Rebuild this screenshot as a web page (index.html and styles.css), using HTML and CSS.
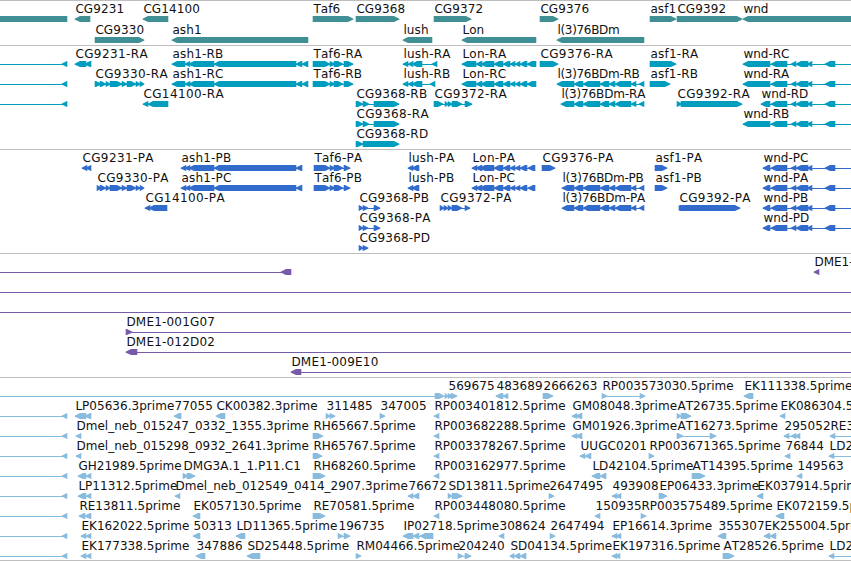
FILE: index.html
```html
<!DOCTYPE html>
<html lang="en">
<head>
    <meta charset="UTF-8">
    <meta name="viewport" content="width=device-width, initial-scale=1.0">
    <title>Genome Browser</title>
    <link rel="stylesheet" href="styles.css">
</head>
<body>
    <main class="browser">
        <section class="track genes"><svg id="genes" width="851" height="44"></svg></section>
        <section class="track transcripts"><svg id="transcripts" width="851" height="103"></svg></section>
        <section class="track proteins"><svg id="proteins" width="851" height="103"></svg></section>
        <section class="track clones"><svg id="clones" width="851" height="123"></svg></section>
        <section class="track ests"><svg id="ests" width="851" height="182"></svg></section>
    </main>
    <script src="tracks.js"></script>
</body>
</html>
```

FILE: styles.css
```css
body {
    margin: 0;
    padding: 0;
    background-color: #fff;
    overflow: hidden;
}

.browser {
    width: 851px;
    border-bottom: 1px solid #bebebe;
}

.track {
    border-top: 1px solid #bebebe;
}

.track svg {
    display: block;
    overflow: hidden;
}

.track text {
    font-family: "DejaVu Sans", sans-serif;
    font-size: 12px;
    font-kerning: none;
    fill: #111;
}

.genes {
    color: #408f94;
}

.transcripts {
    color: #009dbf;
}

.proteins {
    color: #316bcb;
}

.clones {
    color: #775ba8;
}

.ests {
    color: #88bbdd;
}

.shape {
    fill: currentColor;
}
```

FILE: tracks.js
```javascript
const SVG_NS = 'http://www.w3.org/2000/svg';
const WIDTH = 851;
const OFF = 870;

// exon lists shared by several transcripts: start, end, start, end...
const EDGE = ['', '<', [-20, -10, 62, 67]];
const WND = [771, 787, 791, 796, 796, 808, 807, 812, 825, 835, OFF, OFF + 5];
const BDM = [574, 583, 583, 600, 600, 609, 609, 615, 615, 631, 631, 636, 639, 644];
const LON = [494, 503, 503, 510, 510, 515, 515, 520, 520, 527];
const CG9330 = [100, 106, 106, 110, 110, 122, 122, 127, 127, 136, 136, 140, 140, 144];
const ASH1_R = [172, 185, 185, 190, 189, 214, 214, 296, 296, 302, 302, 308];
const ASH1_P = [181, 186, 185, 190, 189, 214, 214, 296, 296, 302];
const TAF6_R = [313, 330, 330, 335, 334, 343, 344, 353];
const TAF6_P = [314, 330, 330, 335, 334, 343, 344, 350];
const LON_R = [462, 476, 476, 482, 481, 494, ...LON, 527, 536];
const LON_P = [472, 477, 476, 482, 480, 494, ...LON, 528, 535];
const LUSH = [403, 408, 408, 413, 412, 422];

// name, strand, exons
const genes = [
    [
        ['', '<', [-20, 67]], ['CG9231', '<', [75, 90]], ['CG14100', '<', [143, 168]],
        ['Taf6', '>', [313, 353]], ['CG9368', '>', [356, 399]], ['CG9372', '>', [434, 471]],
        ['CG9376', '>', [540, 558]], ['asf1', '>', [650, 676]], ['CG9392', '>', [677, 742]],
        ['wnd', '<', [743, OFF]]
    ],
    [
        ['CG9330', '>', [95, 144]], ['ash1', '<', [172, 308]], ['lush', '<', [403, 432]],
        ['Lon', '<', [462, 536]], ['l(3)76BDm', '<', [557, 644]]
    ]
];

const transcripts = [
    [
        EDGE, ['CG9231-RA', '<', [75, 86, 85, 91]], ['ash1-RB', '<', ASH1_R],
        ['Taf6-RA', '>', TAF6_R], ['lush-RA', '<', [...LUSH, 432, 437]], ['Lon-RA', '<', LON_R],
        ['CG9376-RA', '>', [540, 558]], ['asf1-RA', '>', [650, 676]], ['wnd-RC', '<', [743, 770, ...WND]]
    ],
    [
        EDGE, ['CG9330-RA', '>', [95, 101, ...CG9330]], ['ash1-RC', '<', ASH1_R],
        ['Taf6-RB', '>', TAF6_R], ['lush-RB', '<', [...LUSH, 430, 435]], ['Lon-RC', '<', LON_R],
        ['l(3)76BDm-RB', '<', [557, 574, ...BDM]], ['asf1-RB', '>', [650, 670]],
        ['wnd-RA', '<', [743, 770, ...WND]]
    ],
    [
        EDGE, ['CG14100-RA', '<', [143, 148, 148, 168]],
        ['CG9368-RB', '>', [356, 363, 363, 369, 374, 399]],
        ['CG9372-RA', '>', [434, 443, 445, 448, 448, 452, 452, 462, 465, 472]],
        ['l(3)76BDm-RA', '<', [561, 574, ...BDM]], ['CG9392-RA', '>', [677, 682, 681, 742]],
        ['wnd-RD', '<', [761, 770, ...WND]]
    ],
    [
        ['CG9368-RA', '>', [356, 363, 363, 369, 374, 399]], ['wnd-RB', '<', [743, 770, ...WND]]
    ],
    [
        ['CG9368-RD', '>', [356, 363, 363, 399]]
    ]
];

const proteins = [
    [
        ['CG9231-PA', '<', [82, 87, 86, 91]], ['ash1-PB', '<', ASH1_P], ['Taf6-PA', '>', TAF6_P],
        ['lush-PA', '<', [408, 413, 412, 419]], ['Lon-PA', '<', LON_P], ['CG9376-PA', '>', [542, 555]],
        ['asf1-PA', '>', [655, 667]], ['wnd-PC', '<', [763, 770, ...WND]]
    ],
    [
        ['CG9330-PA', '>', [97, 101, ...CG9330]], ['ash1-PC', '<', ASH1_P], ['Taf6-PB', '>', TAF6_P],
        ['lush-PB', '<', [408, 413, 412, 419]], ['Lon-PC', '<', LON_P],
        ['l(3)76BDm-PB', '<', [562, 574, ...BDM]], ['asf1-PB', '>', [655, 667]],
        ['wnd-PA', '<', [763, 770, ...WND]]
    ],
    [
        ['CG14100-PA', '<', [145, 150, 149, 167]], ['CG9368-PB', '>', [359, 363, 363, 368, 374, 380]],
        ['CG9372-PA', '>', [440, 444, 444, 448, 448, 452, 452, 462, 465, 470]],
        ['l(3)76BDm-PA', '<', [562, 574, ...BDM]], ['CG9392-PA', '>', [679, 681, 680, 740]],
        ['wnd-PB', '<', [763, 770, ...WND]]
    ],
    [
        ['CG9368-PA', '>', [359, 363, 363, 368, 374, 380]], ['wnd-PD', '<', [763, 770, ...WND]]
    ],
    [
        ['CG9368-PD', '>', [359, 363, 363, 368]]
    ]
];

const clones = [
    [['', '<', [-20, -10, 281, 291]], ['DME1-', '<', [814, 819]]],
    [['', '<', [-20, -10, OFF, OFF + 5]]],
    [['', '<', [-20, -10, OFF, OFF + 5]]],
    [['DME1-001G07', '>', [126, 132, OFF, OFF + 5]]],
    [['DME1-012D02', '<', [126, 137, OFF, OFF + 5]]],
    [['DME1-009E10', '<', [291, 301, OFF, OFF + 5]]]
];

const ests = [
    [
        ['', '>', [-20, -10, 435, 444, 445, 448]], ['569675', '>', [448, 452, 451, 457]],
        ['483689', '<', [496, 503, 503, 508]], ['2666263', '>', [543, 553]],
        ['RP003573030.5prime', '>', [602, 607, 640, 645]], ['EK111338.5prime', '<', [744, 753]]
    ],
    [
        EDGE, ['LP05636.3prime', '<', [75, 86, 85, 91]], ['77055', '<', [174, 181]],
        ['CK00382.3prime', '<', [216, 225]], ['311485', '>', [326, 330, 330, 335]],
        ['347005', '>', [380, 385]], ['RP003401812.5prime', '<', [434, 439]],
        ['GM08048.3prime', '<', [572, 577, 576, 582]], ['AT26735.5prime', '>', [677, 681, 681, 691]],
        ['EK086304.5prime', '<', [780, 785]]
    ],
    [
        EDGE, ['Dmel_neb_015247_0332_1355.3prime', '<', [76, 81]], ['RH65667.5prime', '>', [313, 323]],
        ['RP003682288.5prime', '<', [434, 439]], ['GM01926.3prime', '<', [572, 577, 576, 582]],
        ['AT16273.5prime', '>', [677, 683, 710, 716]], ['295052', '<', [784, 789, 791, 796, 795, 800]],
        ['RE3', '<', [830, 835, OFF, OFF + 5]]
    ],
    [
        EDGE, ['Dmel_neb_015298_0932_2641.3prime', '<', [76, 81]], ['RH65767.5prime', '>', [313, 322]],
        ['RP003378267.5prime', '<', [434, 439]], ['UUGC0201', '<', [580, 585, 585, 591]],
        ['RP003671365.5prime', '>', [649, 654]], ['76844', '<', [785, 790]],
        ['LD2', '<', [829, 834, OFF, OFF + 5]]
    ],
    [
        EDGE, ['GH21989.5prime', '<', [78, 86, 86, 91]], ['DMG3A.1_1.P11.C1', '>', [183, 188, 187, 195]],
        ['RH68260.5prime', '>', [313, 325]], ['RP003162977.5prime', '<', [434, 439]],
        ['LD42104.5prime', '<', [592, 600, 600, 606]], ['AT14395.5prime', '>', [692, 705]],
        ['149563', '<', [797, 802]]
    ],
    [
        EDGE, ['LP11312.5prime', '<', [78, 86, 86, 91]],
        ['Dmel_neb_012549_0414_2907.3prime', '<', [175, 180]], ['76672', '<', [408, 413, 413, 419]],
        ['SD13811.5prime', '>', [448, 452, 452, 462]], ['2647495', '>', [549, 554]],
        ['493908', '<', [612, 617, 616, 621]], ['EP06433.3prime', '>', [659, 667]],
        ['EK037914.5prime', '<', [757, 763]]
    ],
    [
        EDGE, ['RE13811.5prime', '<', [79, 85, 85, 91]], ['EK057130.5prime', '<', [193, 200]],
        ['RE70581.5prime', '>', [313, 325]], ['RP003448080.5prime', '<', [434, 439]],
        ['150935', '<', [595, 600]], ['RP003575489.5prime', '>', [641, 646]],
        ['EK072159.5prime', '<', [776, 784]]
    ],
    [
        EDGE, ['EK162022.5prime', '<', [81, 86, 86, 91]], ['50313', '<', [193, 200]],
        ['LD11365.5prime', '<', [236, 245]], ['196735', '>', [338, 343, 344, 350]],
        ['IP02718.5prime', '<', [403, 413, 413, 419, 420, 433]], ['308624', '<', [499, 504]],
        ['2647494', '>', [550, 555]], ['EP16614.3prime', '<', [612, 617, 616, 621]],
        ['355307', '<', [718, 726]], ['EK255004.5prime', '<', [764, 770, 770, 776]]
    ],
    [
        EDGE, ['EK177338.5prime', '<', [81, 86, 86, 91]], ['347886', '<', [196, 205]],
        ['SD25448.5prime', '<', [247, 260]], ['RM04466.5prime', '>', [356, 361]],
        ['204240', '>', [458, 463, 465, 471]], ['SD04134.5prime', '<', [510, 514, 514, 520, 520, 526]],
        ['EK197316.5prime', '<', [612, 617, 616, 620]], ['AT28526.5prime', '>', [723, 734]],
        ['LD2', '<', [829, 834, OFF, OFF + 5]]
    ]
];

function add(svg, tag, attrs) {
    const el = document.createElementNS(SVG_NS, tag);
    for (const key in attrs) {
        el.setAttribute(key, attrs[key]);
    }
    svg.appendChild(el);
    return el;
}

// bar with a pointed end, 6px high
function exonPoints(start, end, strand, y) {
    const head = Math.min(5, end - start);
    const tip = strand === '<' ? start - 0.4 : end + 0.4;
    const neck = strand === '<' ? start + head : end - head;
    const back = strand === '<' ? end + 0.3 : start - 0.3;
    return `${tip},${y + 2.8} ${neck},${y} ${back},${y} ${back},${y + 6} ${neck},${y + 6} ${tip},${y + 3.6}`;
}

function labelSpacing(name) {
    if (name.startsWith('l(3)')) {
        return name.endsWith('A') ? -0.15 : -0.3;
    }
    if (name.startsWith('wnd') || name === 'DME1-') {
        return 0;
    }
    if (/-[RP]A$/.test(name)) {
        return name.startsWith('CG') ? 0.4 : 0.25;
    }
    if (name.includes('-')) {
        return 0.2;
    }
    return name.endsWith('prime') ? 0.03 : 0.1;
}

function drawTrack(id, rows, pitch) {
    const svg = document.getElementById(id);
    rows.forEach((row, i) => {
        const y = 15 + i * pitch;
        row.forEach(([name, strand, exons]) => {
            const first = Math.max(0, exons[0]);
            const last = Math.min(WIDTH, exons[exons.length - 1]);
            if (exons.length > 2) {
                add(svg, 'rect', { class: 'shape', x: first, y: y + 3, width: last - first, height: 1 });
            }
            for (let k = 0; k < exons.length; k += 2) {
                add(svg, 'polygon', { class: 'shape', points: exonPoints(exons[k], exons[k + 1], strand, y) });
            }
            if (name) {
                add(svg, 'text', {
                    x: first + 0.4,
                    y: y - 3,
                    'letter-spacing': labelSpacing(name)
                }).textContent = name;
            }
        });
    });
}

drawTrack('genes', genes, 21);
drawTrack('transcripts', transcripts, 20);
drawTrack('proteins', proteins, 20);
drawTrack('clones', clones, 20);
drawTrack('ests', ests, 20);
```
